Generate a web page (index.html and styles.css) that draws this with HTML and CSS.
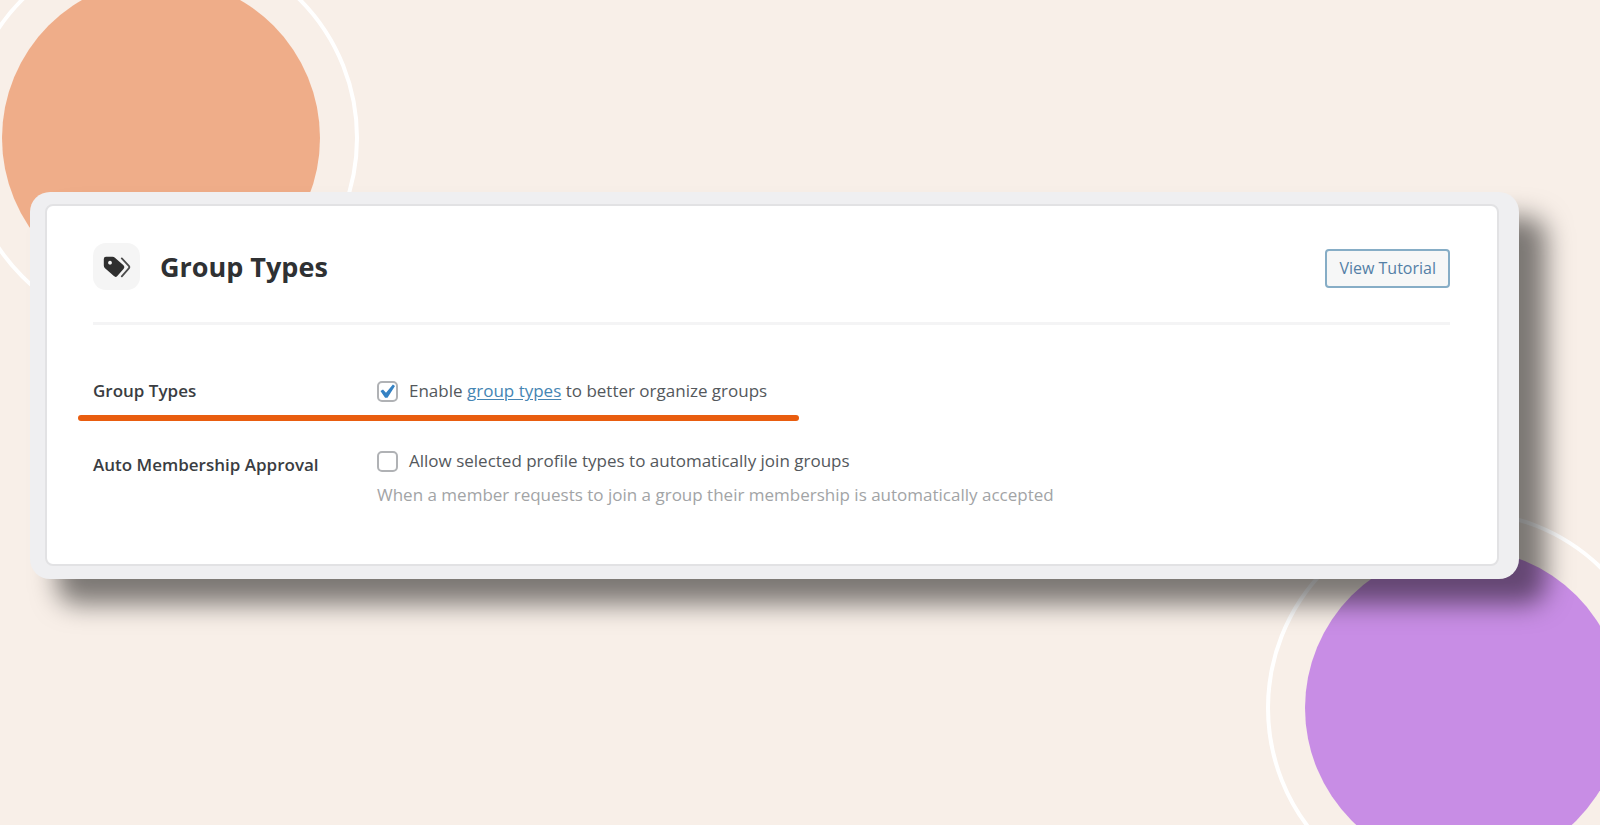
FILE: index.html
```html
<!DOCTYPE html>
<html lang="en">
<head>
<meta charset="utf-8">
<title>Group Types</title>
<link rel="stylesheet" href="styles.css">
</head>
<body>
<div class="backdrop">
  <div class="decor decor-orange"></div>
  <div class="decor decor-purple"></div>
</div>
<main class="frame">
  <section class="panel">
    <header class="panel-header">
      <span class="badge">
        <svg class="badge-icon" viewBox="0 0 28 22" aria-hidden="true">
          <path fill="#2f2f2f" fill-rule="evenodd" d="M3 .8H9.500Q11 .8 12.200 1.900L20.500 9.300Q22.300 11 20.700 12.800L14.300 20Q12.700 21.700 10.900 20.100L2 12.300Q.8 11.200 .8 9.500V3Q.8 .8 3 .8ZM7 4.800a1.900 1.900 0 1 0 .01 0Z"/>
          <path fill="none" stroke="#4c4c4c" stroke-width="1.800" stroke-linecap="round" stroke-linejoin="round" d="M18.800 2.400l7 7.400q1.100 1.300 0 2.600l-7 8"/>
        </svg>
      </span>
      <h1 class="title">Group Types</h1>
      <button class="tutorial" type="button">View Tutorial</button>
    </header>
    <div class="row">
      <h2 class="row-label">Group Types</h2>
      <div class="option">
        <input class="check" type="checkbox" id="enable-types" checked>
        <label for="enable-types">Enable <a href="#group-types">group types</a> to better organize groups</label>
      </div>
    </div>
    <hr class="marker">
    <div class="row row-approval">
      <h2 class="row-label">Auto Membership Approval</h2>
      <div class="field">
        <div class="option">
          <input class="check" type="checkbox" id="auto-join" aria-describedby="auto-join-hint">
          <label for="auto-join">Allow selected profile types to automatically join groups</label>
        </div>
        <p class="hint" id="auto-join-hint">When a member requests to join a group their membership is automatically accepted</p>
      </div>
    </div>
  </section>
</main>
</body>
</html>
```
FILE: styles.css
```css
* {
  box-sizing: border-box;
}

body {
  position: relative;
  min-height: 100vh;
  margin: 0;
  padding: 192px 81px 0 30px;
  background: #f8efe8;
  color: #54585c;
  font: 17px/24px "Open Sans", "Noto Sans", sans-serif;
}

/* Background discs with an outlined ring */
.backdrop {
  position: absolute;
  inset: 0;
  overflow: hidden;
}

.decor {
  position: absolute;
  width: 396px;
  height: 396px;
  padding: 35px;
  border: 4px solid #fff;
  border-radius: 50%;
}

.decor::before {
  content: "";
  display: block;
  height: 100%;
  border-radius: 50%;
}

.decor-orange {
  top: -60px;
  left: -37px;
}

.decor-orange::before {
  background: #efad89;
}

.decor-purple {
  right: -62px;
  bottom: -81px;
}

.decor-purple::before {
  background: #c88de5;
}

.frame {
  position: relative;
  padding: 12px 20px 13px 15px;
  border-radius: 20px;
  background: #efeff1;
  box-shadow: 27px 25px 26px rgba(0, 0, 0, 0.5);
}

.panel {
  padding: 37px 47px 57px 46px;
  border: 2px solid #e2e2e4;
  border-radius: 8px;
  background: #fff;
}

.panel-header {
  display: flex;
  align-items: center;
  padding-bottom: 32px;
  border-bottom: 3px solid #f4f4f5;
}

.badge {
  display: flex;
  align-items: center;
  justify-content: center;
  width: 47px;
  height: 47px;
  border-radius: 13px;
  background: #f5f5f5;
}

.badge-icon {
  width: 28px;
  height: 22px;
}

.title {
  margin: 0 auto 0 20px;
  color: #2f3133;
  font-size: 27px;
  line-height: 40px;
  font-weight: 700;
}

.tutorial {
  margin-top: 4px;
  padding: 0 12px;
  border: 2px solid #86adc6;
  border-radius: 4px;
  background: #f6f7f7;
  color: #537fa6;
  font: inherit;
  font-size: 16px;
  line-height: 35px;
}

.row {
  display: flex;
  align-items: center;
  padding-top: 54px;
}

.row-label {
  flex: 0 0 284px;
  margin: 0;
  color: #3a3d42;
  font-size: 17px;
  line-height: 24px;
  font-weight: 600;
}

.option {
  display: flex;
  align-items: center;
  gap: 11px;
}

.option a {
  color: #4585b3;
  text-underline-offset: 2px;
}

.check {
  display: grid;
  place-items: center;
  width: 21px;
  height: 21px;
  margin: 0;
  appearance: none;
  border: 2px solid #b0b2b5;
  border-radius: 5px;
  background: #fff;
}

.check:checked::before {
  content: "";
  width: 15px;
  height: 14px;
  background: #3582c4;
  clip-path: polygon(3% 50%, 20% 40%, 40% 62%, 86% 4%, 100% 14%, 50% 98%, 34% 98%);
}

.marker {
  width: 721px;
  height: 6px;
  margin: 12px 0 0 -15px;
  border: 0;
  border-radius: 3px;
  background: #e95d0f;
}

.row-approval {
  align-items: flex-start;
  padding-top: 28px;
}

.row-approval .row-label {
  padding-top: 4px;
}

.hint {
  margin: 10px 0 0;
  color: #a2a4a6;
}
```
